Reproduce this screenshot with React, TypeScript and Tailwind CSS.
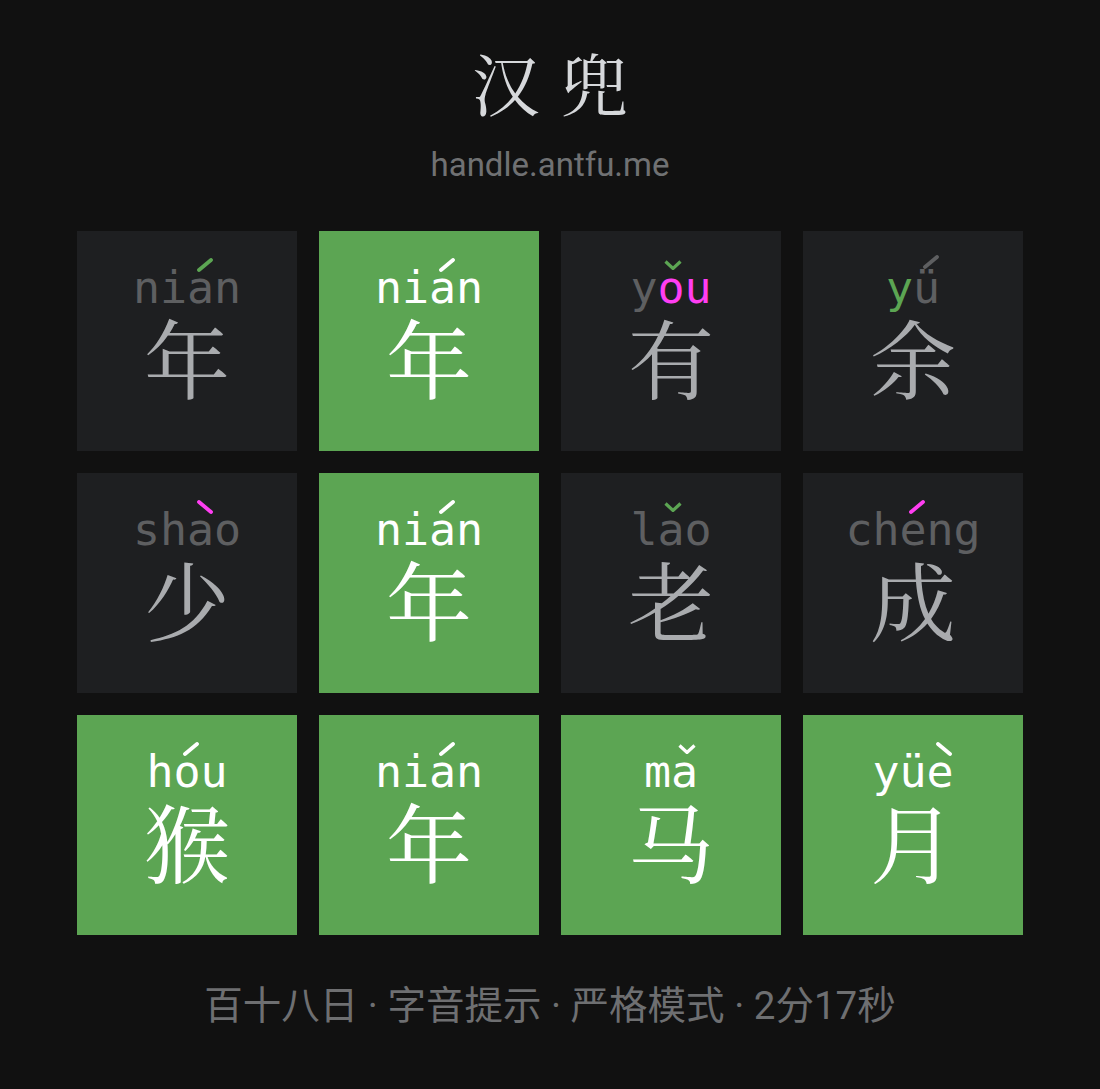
import React from 'react'

type Tile = {
  py: string
  vowel: number
  tone: 1 | 2 | 3 | 4
  colors: string
  toneColor: string
  ch: string
  hit?: boolean
}

const textColor: Record<string, string> = {
  x: 'text-[#5e5f61]',
  g: 'text-[#5ca553]',
  m: 'text-[#ff3ef2]',
  w: 'text-white',
}

const strokeColor: Record<string, string> = {
  x: '#5e5f61',
  g: '#5ca553',
  m: '#ff3ef2',
  w: '#ffffff',
}

const tiles: Tile[] = [
  { py: 'nian', vowel: 2, tone: 2, colors: 'xxxx', toneColor: 'g', ch: '年' },
  { py: 'nian', vowel: 2, tone: 2, colors: 'wwww', toneColor: 'w', ch: '年', hit: true },
  { py: 'you', vowel: 1, tone: 3, colors: 'xmm', toneColor: 'g', ch: '有' },
  { py: 'yü', vowel: 1, tone: 2, colors: 'gx', toneColor: 'x', ch: '余' },
  { py: 'shao', vowel: 2, tone: 4, colors: 'xxxx', toneColor: 'm', ch: '少' },
  { py: 'nian', vowel: 2, tone: 2, colors: 'wwww', toneColor: 'w', ch: '年', hit: true },
  { py: 'lao', vowel: 1, tone: 3, colors: 'xxx', toneColor: 'g', ch: '老' },
  { py: 'cheng', vowel: 2, tone: 2, colors: 'xxxxx', toneColor: 'm', ch: '成' },
  { py: 'hou', vowel: 1, tone: 2, colors: 'www', toneColor: 'w', ch: '猴', hit: true },
  { py: 'nian', vowel: 2, tone: 2, colors: 'wwww', toneColor: 'w', ch: '年', hit: true },
  { py: 'ma', vowel: 1, tone: 3, colors: 'ww', toneColor: 'w', ch: '马', hit: true },
  { py: 'yüe', vowel: 2, tone: 4, colors: 'www', toneColor: 'w', ch: '月', hit: true },
]

function ToneMark({ tone, color, umlaut }: { tone: number; color: string; umlaut: boolean }) {
  const c = strokeColor[color]
  if (tone === 3) {
    return (
      <svg
        width="18"
        height="10"
        viewBox="0 0 18 10"
        className={`absolute left-1/2 ml-[-7px] ${umlaut ? 'top-[-9px]' : 'top-[-6px]'}`}
      >
        <polyline points="1.5,1.5 9,8.5 16.5,1.5" fill="none" stroke={c} strokeWidth="3.2" />
      </svg>
    )
  }
  const pts = tone === 2 ? 'M2 12 L14 2' : 'M2 2 L14 12'
  return (
    <svg
      width="16"
      height="14"
      viewBox="0 0 16 14"
      className={`absolute left-1/2 ml-[-4px] ${umlaut ? 'top-[-11px]' : 'top-[-8px]'}`}
    >
      <path d={pts} fill="none" stroke={c} strokeWidth="3.8" strokeLinecap="round" />
    </svg>
  )
}

function TileCard({ t }: { t: Tile }) {
  const letters = Array.from(t.py)
  return (
    <div
      className={`w-[220px] h-[220px] flex flex-col items-center pt-[35px] ${t.hit ? 'bg-[#5ca553]' : 'bg-[#1e1f21]'}`}
    >
      <div className="flex h-[44px] text-[45px] leading-[44px] font-['DejaVu_Sans_Mono',monospace]">
        {letters.map((l, i) => (
          <span key={i} className={`relative w-[27px] text-center ${textColor[t.colors[i]]}`}>
            {l}
            {i === t.vowel && <ToneMark tone={t.tone} color={t.toneColor} umlaut={l === 'ü'} />}
          </span>
        ))}
      </div>
      <div
        className={`mt-[3px] text-[86px] leading-none font-['Noto_Serif_CJK_SC','Noto_Serif_CJK','Noto_Sans_CJK_SC',serif] ${t.hit ? 'text-white' : 'text-[#a9abae]'}`}
      >
        {t.ch}
      </div>
    </div>
  )
}

export default function App() {
  return (
    <div className="min-h-screen bg-[#111111] flex flex-col items-center pt-[48px]">
      <h1 className="text-[68px] leading-none text-[#d6d8db] font-['Noto_Serif_CJK_SC','Noto_Sans_CJK_SC',serif] tracking-[0.3em] pl-[0.3em]">
        汉兜
      </h1>
      <p className="mt-[32px] text-[33px] leading-none text-[#707173] font-['Roboto',sans-serif]">
        handle.antfu.me
      </p>
      <div className="mt-[50px] grid grid-cols-4 gap-[22px] w-[946px]">
        {tiles.map((t, i) => (
          <TileCard key={i} t={t} />
        ))}
      </div>
      <p className="mt-[52px] text-[38.5px] leading-none text-[#6e6f71] font-['Roboto','Noto_Sans_CJK_SC',sans-serif]">
        百十八日 · 字音提示 · 严格模式 · 2分17秒
      </p>
    </div>
  )
}
